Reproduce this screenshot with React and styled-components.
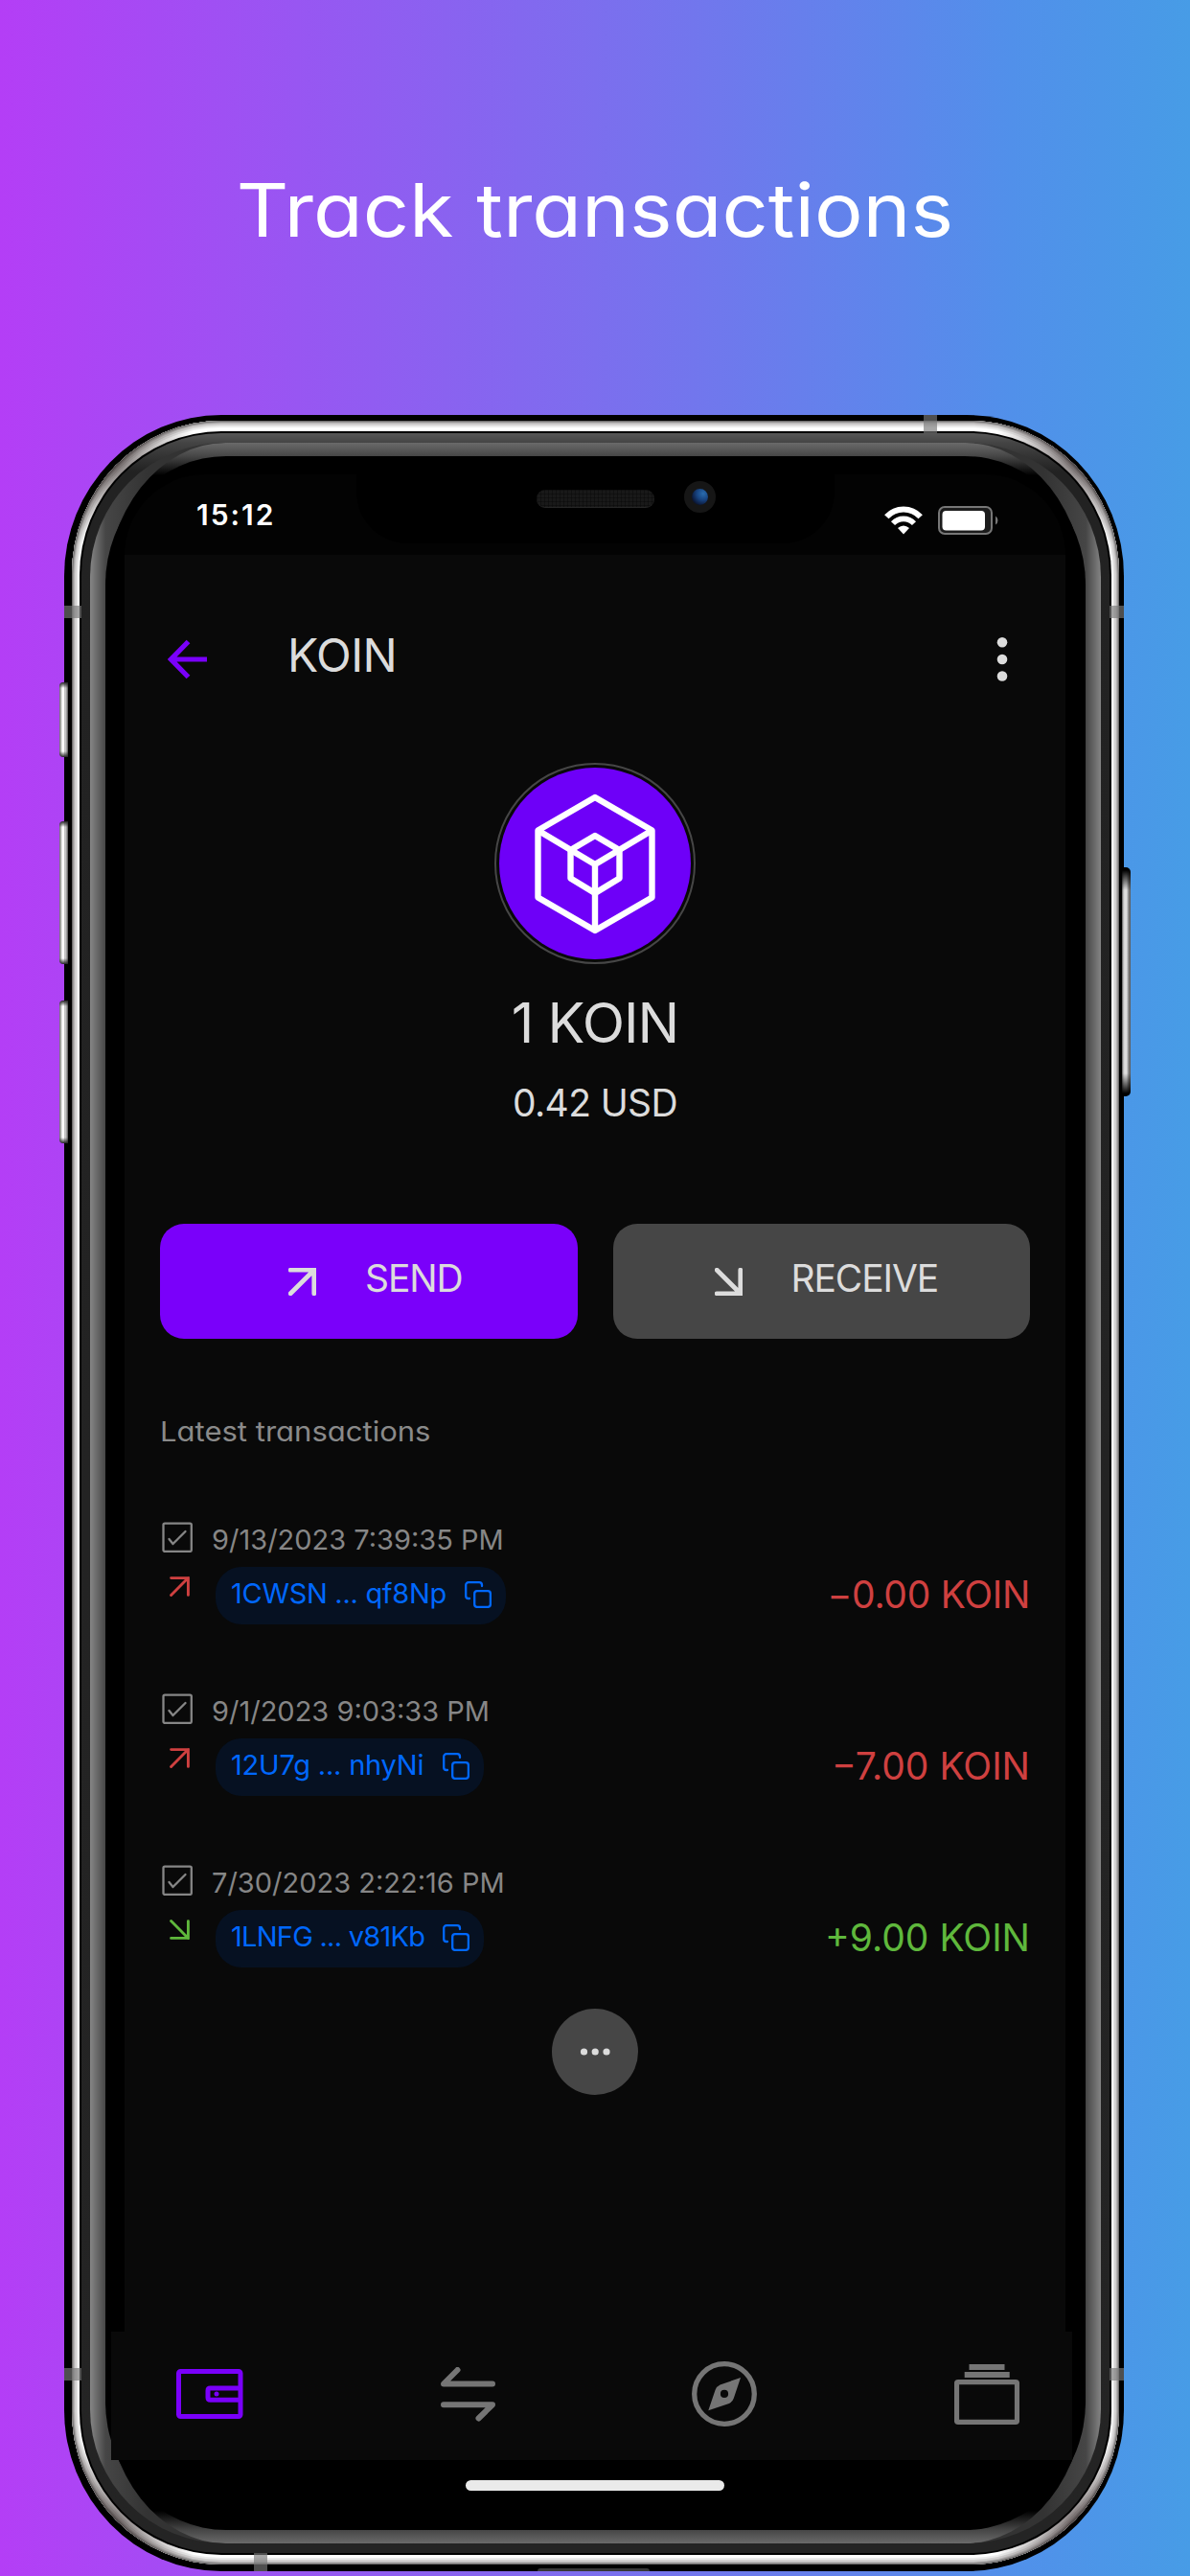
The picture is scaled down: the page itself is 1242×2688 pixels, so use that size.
import React from "react";
import styled, { createGlobalStyle } from "styled-components";

const Global = createGlobalStyle`
  *, *::before, *::after { box-sizing: border-box; }
  body { margin: 0; }
`;

const Page = styled.main`
  width: 1242px;
  height: 2688px;
  overflow: hidden;
  background: linear-gradient(90deg, #b43ef6, #7c6eee 50%, #5190ea 85%, #479ce6);
  font-family: Inter, "Liberation Sans", sans-serif;
  font-feature-settings: "cv11", "ss03";
  color: #dcdcdc;
`;

const Title = styled.h1`
  margin: 0;
  height: 433px;
  padding-top: 179px;
  font-size: 77px;
  line-height: 80px;
  font-weight: 400;
  text-align: center;
  color: #fff;
  transform: scaleX(1.098);
`;

/* ---------- Device ---------- */

const Device = styled.div`
  position: relative;
  width: 1105.5px;
  height: 2250px;
  margin-left: 67px;
`;

const Shell = styled.div`
  position: relative;
  height: 100%;
  padding: 6px 4.5px 7px 8px;
  border-radius: 164px / 168px;
  background: #000;
`;

const Steel = styled.div`
  position: relative;
  height: 100%;
  padding: 11px 8px 10px;
  border-radius: 156px / 160px;
  background: #fff;
  box-shadow: inset 0 0 0 1px #6d6b6b, inset 0 0 0 2px #9a9898, inset 0 0 0 3px #b4b2b2,
    inset 0 0 0 5px #d2d0d0, inset 0 0 0 7px #ececec;
  &::before {
    content: "";
    position: absolute;
    inset: 0;
    border-radius: inherit;
    background:
      radial-gradient(circle at 44px 44px, rgba(50, 38, 38, 0.6), rgba(50, 38, 38, 0) 90px),
      radial-gradient(circle at calc(100% - 44px) 44px, rgba(50, 38, 38, 0.6), rgba(50, 38, 38, 0) 90px),
      radial-gradient(circle at 44px calc(100% - 44px), rgba(50, 38, 38, 0.6), rgba(50, 38, 38, 0) 90px),
      radial-gradient(circle at calc(100% - 44px) calc(100% - 44px), rgba(50, 38, 38, 0.6), rgba(50, 38, 38, 0) 90px);
  }
`;

const Gasket = styled.div`
  position: relative;
  height: 100%;
  padding: 2px;
  border-radius: 148px / 150px;
  background: #000;
`;

const Rim = styled.div`
  height: 100%;
  padding: 10px 9px;
  border-radius: 146px / 148px;
  background: linear-gradient(#585858 0, #444 10px, #222 40px, #242424 100%);
`;

const SideShine = styled.div`
  height: 100%;
  padding: 0 16px;
  overflow: hidden;
  border-radius: 140px / 140px;
  background:
    linear-gradient(90deg, #868686, #464646 16px, #333 60px) left / 50% 100% no-repeat,
    linear-gradient(270deg, #868686, #464646 16px, #333 60px) right / 50% 100% no-repeat;
`;

const EdgeShine = styled.div`
  height: 100%;
  padding: 14px 0;
  border-radius: 126px / 160px;
  background:
    linear-gradient(#6a6a6a, #464646 14px, #000 34px) top / 100% 50% no-repeat,
    linear-gradient(0deg, #6a6a6a, #464646 14px, #000 34px) bottom / 100% 50% no-repeat;
`;

const Glass = styled.div`
  height: 100%;
  padding-top: 19px;
  border-radius: 126px / 134px;
  background: #000;
`;

const VolumeKey = styled.span`
  position: absolute;
  top: ${(p) => p.$top}px;
  left: -5px;
  width: 9px;
  height: ${(p) => p.$height}px;
  border-radius: 4px 0 0 4px;
  background:
    linear-gradient(#222, rgba(34, 34, 34, 0) 6px calc(100% - 6px), #222),
    linear-gradient(90deg, #666, #fff 35% 50%, #c4c4c4 60% 75%, #555);
`;

const PowerKey = styled.span`
  position: absolute;
  top: 472px;
  left: 1104px;
  width: 9px;
  height: 239px;
  border-radius: 0 5px 5px 0;
  background:
    linear-gradient(#000 3px, rgba(0, 0, 0, 0) 24px calc(100% - 24px), #000 calc(100% - 3px)),
    linear-gradient(90deg, #555, #b4b4b4 15%, #dedede 30% 55%, #8a8a8a 75%, #555);
`;

const Antenna = styled.span`
  position: absolute;
  top: ${(p) => p.$top}px;
  left: ${(p) => p.$left}px;
  width: ${(p) => p.$width}px;
  height: ${(p) => p.$height}px;
  background: rgba(120, 120, 120, 0.66);
`;

const Port = styled.span`
  position: absolute;
  left: 494px;
  top: 2247px;
  width: 117px;
  height: 3px;
  border-radius: 3px 3px 0 0;
  background: #383838;
`;

const Notch = styled.div`
  position: absolute;
  top: 60px;
  left: 305px;
  width: 499px;
  height: 74px;
  border-radius: 0 0 54px 54px;
  background: #000;
`;

const Speaker = styled.span`
  position: absolute;
  top: 18px;
  left: 188px;
  width: 123px;
  height: 19px;
  border-radius: 9px;
  border-bottom: 1px solid #262626;
  background:
    repeating-linear-gradient(90deg, rgba(0, 0, 0, 0.3) 0 1px, transparent 1px 4px),
    repeating-linear-gradient(rgba(0, 0, 0, 0.3) 0 1px, transparent 1px 4px), #191919;
`;

const Camera = styled.span`
  position: absolute;
  top: 9px;
  left: 342px;
  width: 33px;
  height: 33px;
  border-radius: 50%;
  border: 8px solid #161616;
  background: radial-gradient(circle at 70% 30%, #2a6cae, #17427f 40%, #0b1634 75%);
`;

/* ---------- Status bar ---------- */

const StatusBar = styled.div`
  display: flex;
  align-items: flex-start;
  width: 982px;
  height: 84px;
  margin-left: 20px;
  padding: 27px 69px 0 75px;
  border-radius: 104px 104px 0 0;
  background: #030303;
  color: #fff;
`;

const Clock = styled.time`
  flex: 1;
  font-size: 30px;
  line-height: 30px;
  font-weight: 600;
  letter-spacing: 2px;
`;

const StatusIcons = styled.div`
  display: flex;
  gap: 16px;
  padding-top: 6px;
`;

/* ---------- App ---------- */

const Screen = styled.section`
  width: 982px;
  height: 1854px;
  margin-left: 20px;
  padding: 64px 37px 0;
  background: #090909;
`;

const Header = styled.header`
  display: flex;
  align-items: center;
  height: 80px;
  padding: 0 23px 0 8px;
`;

const HeaderIcon = styled.span`
  display: flex;
  margin-top: 10px;
`;

const HeaderTitle = styled.h2`
  flex: 1;
  margin: 2px 0 0 84px;
  font-size: 48px;
  line-height: 60px;
  font-weight: 400;
  letter-spacing: -0.6px;
`;

const Balance = styled.div`
  display: flex;
  flex-direction: column;
  align-items: center;
  margin-top: 73px;
`;

const Coin = styled.div`
  display: flex;
  align-items: center;
  justify-content: center;
  width: 210px;
  height: 210px;
  border: 2.5px solid #464646;
  border-radius: 50%;
`;

const CoinFace = styled.div`
  width: 200px;
  height: 200px;
  border-radius: 50%;
  background: #6e00f8;
`;

const Amount = styled.div`
  margin-top: 31px;
  font-size: 58px;
  line-height: 60px;
  letter-spacing: -1px;
`;

const Fiat = styled.div`
  margin-top: 34px;
  font-size: 39px;
  line-height: 40px;
  letter-spacing: -0.6px;
`;

const Actions = styled.div`
  display: grid;
  grid-template-columns: 1fr 1fr;
  gap: 37px;
  margin-top: 106px;
`;

const ActionButton = styled.button`
  display: flex;
  align-items: center;
  height: 120px;
  padding: 0 0 0 ${(p) => p.$inset}px;
  border: 0;
  border-radius: 25px;
  background: ${(p) => (p.$primary ? "#7a00fa" : "#464646")};
  color: #dcdcdc;
  font: inherit;
  font-size: 39px;
  font-feature-settings: inherit;
  letter-spacing: -1.1px;
`;

const ActionLabel = styled.span`
  margin: -8px 0 0 51px;
`;

const SectionTitle = styled.h3`
  margin: 77px 0 0;
  font-size: 29px;
  line-height: 40px;
  font-weight: 400;
  color: #8a8a8a;
  transform: scaleX(1.07);
  transform-origin: left;
`;

const List = styled.ul`
  display: grid;
  gap: 72.2px;
  margin: 74px 0 0;
  padding: 0;
  list-style: none;
`;

const Stamp = styled.div`
  display: flex;
  align-items: center;
  height: 32px;
  padding-left: 2px;
  color: #868686;
`;

const StampText = styled.span`
  padding: 6px 0 0 20px;
  font-size: 29px;
  line-height: 32px;
`;

const Transfer = styled.div`
  display: flex;
  align-items: flex-start;
  height: 60px;
  margin-top: 15px;
  color: ${(p) => (p.$incoming ? "#5fb83c" : "#cf4040")};
`;

const Direction = styled.span`
  display: flex;
  width: 58px;
  padding: 10px 0 0 10px;
`;

const AddressPill = styled.span`
  display: flex;
  align-items: center;
  justify-content: space-between;
  width: ${(p) => p.$width}px;
  height: 60px;
  padding: 0 15px 2px 16px;
  border-radius: 27px;
  background: #061122;
  color: #0068ff;
`;

const AddressText = styled.span`
  padding-bottom: 3px;
  font-size: 29px;
  white-space: nowrap;
  letter-spacing: ${(p) => p.$tracking}px;
`;

const Value = styled.span`
  margin-left: auto;
  font-size: 39px;
  line-height: 57px;
  letter-spacing: ${(p) => p.$tracking}px;
`;

const MoreButton = styled.button`
  display: flex;
  align-items: center;
  justify-content: center;
  width: 90px;
  height: 90px;
  margin: 43px auto 0;
  padding: 0;
  border: 0;
  border-radius: 50%;
  background: #464646;
`;

const TabBar = styled.nav`
  display: flex;
  align-items: center;
  justify-content: space-between;
  width: 1003px;
  height: 134px;
  margin-left: 6px;
  padding: 0 55px 4px 68px;
  background: #090909;
`;

const HomeIndicator = styled.div`
  width: 270px;
  height: 11px;
  margin: 21px 0 0 376px;
  border-radius: 6px;
  background: #eaeaea;
`;

/* ---------- Icons ---------- */

const WifiIcon = () => (
  <svg width="40" height="30" viewBox="0 0 40 30" fill="none" stroke="#fff">
    <path d="M2.3 11.2C12 .8 28 .8 37.700 11.200" strokeWidth="6" />
    <path d="M9 18.200C15 11.800 25 11.800 31 18.200" strokeWidth="5.600" />
    <path d="M20 29.500L14 23Q20 18 26 23Z" fill="#fff" stroke="none" />
  </svg>
);

const BatteryIcon = () => (
  <svg width="64" height="30" viewBox="0 0 64 30">
    <rect x="1" y="1" width="55" height="28" rx="6" fill="#1c1c1c" stroke="#777" strokeWidth="2" />
    <rect x="4.500" y="5" width="44.500" height="20.500" rx="4" fill="#fff" />
    <path d="M60 10.500Q62.500 12 62.500 15T60 19.500Z" fill="#777" />
  </svg>
);

const BackIcon = () => (
  <svg width="41" height="42" viewBox="0 0 41 42" fill="none" stroke="#7a00fa" strokeWidth="5.200">
    <path d="M41 21H3.500M21.500 2.500L3.500 21L21.500 39.500" />
  </svg>
);

const KebabIcon = () => (
  <svg width="12" height="48" viewBox="0 0 12 48" fill="#dcdcdc">
    <circle cx="6" cy="6.300" r="5.300" />
    <circle cx="6" cy="24" r="5.300" />
    <circle cx="6" cy="41.500" r="5.300" />
  </svg>
);

const CubeLogo = () => (
  <svg width="200" height="200" viewBox="0 0 200 200" fill="none" stroke="#fff" strokeWidth="6.400" strokeLinejoin="round">
    <path d="M100 31L159.500 65.500V135.500L100 170L40.500 135.500V65.500Z" />
    <path d="M40.500 65.500L100 101L159.500 65.500M100 101V170" />
    <path d="M100 71L125.500 86V115.500L100 131L74.500 115.500V86Z" />
  </svg>
);

const UpRight = ({ size, stroke }) => (
  <svg width={size} height={size} viewBox="0 0 29 29" fill="none" stroke="currentColor" strokeWidth={stroke} strokeLinecap="round">
    <path d="M2.200 2.200H26.800V26.800M26.800 2.200L2.200 26.800" />
  </svg>
);

const DownRight = ({ size, stroke }) => (
  <svg width={size} height={size} viewBox="0 0 29 29" fill="none" stroke="currentColor" strokeWidth={stroke} strokeLinecap="round">
    <path d="M26.800 2.200V26.800H2.200M26.800 26.800L2.200 2.200" />
  </svg>
);

const CheckIcon = () => (
  <svg width="32" height="32" viewBox="0 0 32 32" fill="none" stroke="#868686" strokeWidth="2.300" strokeLinejoin="round" strokeLinecap="round">
    <rect x="1.500" y="1.600" width="29.300" height="29.300" rx="1.500" />
    <path d="M7.500 18L11.500 23L24.500 10" />
  </svg>
);

const CopyIcon = () => (
  <svg width="28" height="28" viewBox="0 0 28 28" fill="none" stroke="currentColor" strokeWidth="2.300" strokeLinecap="round" strokeLinejoin="round">
    <rect x="10.200" y="10.200" width="16.700" height="16.700" rx="2.800" />
    <path d="M5 18H4A2.800 2.800 0 0 1 1.200 15.200V4A2.800 2.800 0 0 1 4 1.200H15.200A2.800 2.800 0 0 1 18 4V5" />
  </svg>
);

const DotsIcon = () => (
  <svg width="32" height="8" viewBox="0 0 32 8" fill="#dcdcdc">
    <circle cx="4.500" cy="4" r="3.600" />
    <circle cx="16.200" cy="4" r="3.600" />
    <circle cx="28" cy="4" r="3.600" />
  </svg>
);

const WalletIcon = () => (
  <svg width="70" height="52" viewBox="0 0 70 52" fill="none" stroke="#7a00fa" strokeWidth="5">
    <rect x="2.500" y="2.500" width="64.500" height="47" rx="2" />
    <path d="M66 20H35.500Q33 20 33 22.500V29.700Q33 32.200 35.500 32.200H66" />
    <circle cx="42" cy="26.100" r="2.500" fill="#7a00fa" stroke="none" />
  </svg>
);

const SwapIcon = () => (
  <svg width="57" height="57" viewBox="0 0 57 57" fill="none" stroke="#757575" strokeWidth="6" strokeLinecap="round" strokeLinejoin="round">
    <path d="M54 17.500H3L17.500 3M3 39.300H54L39.500 53.500" />
  </svg>
);

const CompassIcon = () => (
  <svg width="68" height="68" viewBox="0 0 68 68">
    <circle cx="34" cy="34" r="31.300" fill="none" stroke="#757575" strokeWidth="5.300" />
    <path fillRule="evenodd" fill="#757575" d="M51 17L43.800 38.500Q42.500 42.500 39 44L17.300 51.300L24.500 30Q26 26 29.500 24.500ZM34 29.800A4.100 4.100 0 1 0 34 38A4.100 4.100 0 1 0 34 29.800Z" />
  </svg>
);

const StackIcon = () => (
  <svg width="68" height="63" viewBox="0 0 68 63" fill="#757575">
    <rect x="15.500" y="0" width="37" height="6" />
    <rect x="10.700" y="8" width="47" height="6" />
    <rect x="2.500" y="18.600" width="63" height="41.700" rx="1.500" fill="none" stroke="#757575" strokeWidth="5.200" />
  </svg>
);

const transactions = [
  { date: "9/13/2023 7:39:35 PM", address: "1CWSN ... qf8Np", value: "−0.00 KOIN", width: 302.5, tracking: -0.3, valueTracking: -0.3 },
  { date: "9/1/2023 9:03:33 PM", address: "12U7g ... nhyNi", value: "−7.00 KOIN", width: 280, tracking: -0.2, valueTracking: 0 },
  { date: "7/30/2023 2:22:16 PM", address: "1LNFG ... v81Kb", value: "+9.00 KOIN", width: 280, tracking: -0.75, valueTracking: 0, incoming: true },
];

function Transaction({ date, address, value, width, tracking, valueTracking, incoming }) {
  const Arrow = incoming ? DownRight : UpRight;
  return (
    <li>
      <Stamp>
        <CheckIcon />
        <StampText>{date}</StampText>
      </Stamp>
      <Transfer $incoming={incoming}>
        <Direction>
          <Arrow size={21} stroke={4} />
        </Direction>
        <AddressPill $width={width}>
          <AddressText $tracking={tracking}>{address}</AddressText>
          <CopyIcon />
        </AddressPill>
        <Value $tracking={valueTracking}>{value}</Value>
      </Transfer>
    </li>
  );
}

export default function App() {
  return (
    <Page>
      <Global />
      <Title>Track transactions</Title>
      <Device>
        <Shell>
          <Steel>
            <Gasket>
              <Rim>
                <SideShine>
                  <EdgeShine>
                    <Glass>
                      <StatusBar>
                        <Clock>15:12</Clock>
                        <StatusIcons>
                          <WifiIcon />
                          <BatteryIcon />
                        </StatusIcons>
                      </StatusBar>
                      <Screen>
                        <Header>
                          <HeaderIcon><BackIcon /></HeaderIcon>
                          <HeaderTitle>KOIN</HeaderTitle>
                          <HeaderIcon><KebabIcon /></HeaderIcon>
                        </Header>
                        <Balance>
                          <Coin><CoinFace><CubeLogo /></CoinFace></Coin>
                          <Amount>1 KOIN</Amount>
                          <Fiat>0.42 USD</Fiat>
                        </Balance>
                        <Actions>
                          <ActionButton $primary $inset={134}>
                            <UpRight size={29} stroke={4.8} />
                            <ActionLabel>SEND</ActionLabel>
                          </ActionButton>
                          <ActionButton $inset={106}>
                            <DownRight size={29} stroke={4.8} />
                            <ActionLabel>RECEIVE</ActionLabel>
                          </ActionButton>
                        </Actions>
                        <SectionTitle>Latest transactions</SectionTitle>
                        <List>
                          {transactions.map((t) => <Transaction key={t.date} {...t} />)}
                        </List>
                        <MoreButton><DotsIcon /></MoreButton>
                      </Screen>
                      <TabBar>
                        <WalletIcon />
                        <SwapIcon />
                        <CompassIcon />
                        <StackIcon />
                      </TabBar>
                      <HomeIndicator />
                    </Glass>
                  </EdgeShine>
                </SideShine>
              </Rim>
            </Gasket>
          </Steel>
          <Notch>
            <Speaker />
            <Camera />
          </Notch>
          <Antenna $top={199} $left={0} $width={18} $height={13} />
          <Antenna $top={2038} $left={0} $width={18} $height={13} />
          <Antenna $top={199} $left={1091} $width={14.5} $height={13} />
          <Antenna $top={2038} $left={1091} $width={14.5} $height={13} />
          <Antenna $top={0} $left={897} $width={13.5} $height={19} />
          <Antenna $top={2231} $left={198} $width={14} $height={19} />
          <Port />
        </Shell>
        <VolumeKey $top={279} $height={78} />
        <VolumeKey $top={424} $height={149} />
        <VolumeKey $top={611} $height={149} />
        <PowerKey />
      </Device>
    </Page>
  );
}
